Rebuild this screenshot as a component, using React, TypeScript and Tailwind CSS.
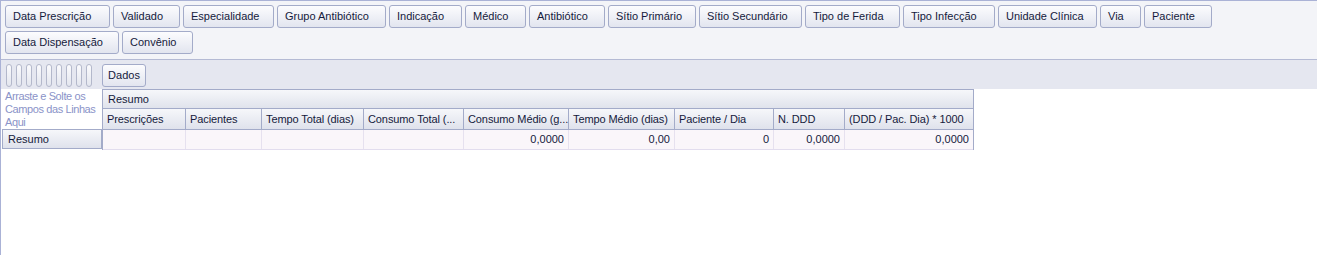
import React from "react";

const row1: [string, number][] = [
  ["Data Prescrição", 105],
  ["Validado", 67],
  ["Especialidade", 91],
  ["Grupo Antibiótico", 109],
  ["Indicação", 73],
  ["Médico", 61],
  ["Antibiótico", 76],
  ["Sítio Primário", 88],
  ["Sítio Secundário", 103],
  ["Tipo de Ferida", 95],
  ["Tipo Infecção", 92],
  ["Unidade Clínica", 99],
  ["Via", 41],
  ["Paciente", 68],
];
const row2: [string, number][] = [
  ["Data Dispensação", 114],
  ["Convênio", 71],
];

const cols: [string, number, string][] = [
  ["Prescrições", 83, ""],
  ["Pacientes", 76, ""],
  ["Tempo Total (dias)", 102, ""],
  ["Consumo Total (...", 100, ""],
  ["Consumo Médio (g...", 105, "0,0000"],
  ["Tempo Médio (dias)", 106, "0,00"],
  ["Paciente / Dia", 99, "0"],
  ["N. DDD", 71, "0,0000"],
  ["(DDD / Pac. Dia) * 1000", 129, "0,0000"],
];

function FieldButton({ label, width }: { label: string; width: number }) {
  return (
    <div
      style={{ width }}
      className="h-[23px] shrink-0 rounded-[3px] border border-[#a3abc9] bg-gradient-to-b from-[#fcfcfe] to-[#e2e5ef] pl-[7px] flex items-center whitespace-nowrap"
    >
      {label}
    </div>
  );
}

export default function App() {
  return (
    <div className="w-[1317px] h-[255px] overflow-hidden bg-white border-l border-t border-[#aab2d6] text-[11px] leading-[13px] text-[#151a3c] font-['Liberation_Sans',Arial,sans-serif]">
      {/* filter area */}
      <div className="bg-[#f3f4f8] border-b border-[#b4bad4] pt-[4px] pl-[4px] pb-[5px] flex flex-col gap-[3px]">
        <div className="flex gap-[3px]">
          {row1.map(([l, w]) => (
            <FieldButton key={l} label={l} width={w} />
          ))}
        </div>
        <div className="flex gap-[3px]">
          {row2.map(([l, w]) => (
            <FieldButton key={l} label={l} width={w} />
          ))}
        </div>
      </div>
      {/* data area */}
      <div className="bg-[#e5e7f0] h-[29px] pt-[4px] pl-[5px] flex items-start">
        <div className="flex gap-[4px]">
          {Array.from({ length: 9 }).map((_, i) => (
            <div
              key={i}
              className="w-[6px] h-[23px] rounded-full border border-[#b3b8cb] bg-gradient-to-b from-[#fbfbfd] to-[#e3e6ee]"
            />
          ))}
        </div>
        <div className="ml-[10px] w-[44px] h-[23px] rounded-[3px] border border-[#a3abc9] bg-gradient-to-b from-[#fcfcfe] to-[#e2e5ef] flex items-center justify-center">
          Dados
        </div>
      </div>
      {/* body */}
      <div className="flex">
        <div className="w-[101px] shrink-0 flex flex-col">
          <div className="h-[40px] pl-[4px] pt-[1px] text-[#8a93c8] text-[11px] leading-[13px] whitespace-nowrap tracking-[-0.4px]">
            Arraste e Solte os
            <br />
            Campos das Linhas
            <br />
            Aqui
          </div>
          <div className="ml-[1px] h-[20px] border border-[#a3abc9] bg-gradient-to-b from-[#f6f7fa] to-[#dfe2ec] pl-[5px] flex items-center">
            Resumo
          </div>
        </div>
        <div className="border-l border-t border-r border-[#a3abc9] w-[872px]">
          <div className="h-[19px] border-b border-[#a3abc9] bg-gradient-to-b from-[#f6f7fa] to-[#e0e3ec] pl-[5px] flex items-center">
            Resumo
          </div>
          <div className="flex h-[21px] border-b border-[#a3abc9]">
            {cols.map(([l, w], i) => (
              <div
                key={l}
                style={{ width: i === cols.length - 1 ? w - 1 : w }}
                className={
                  "shrink-0 bg-gradient-to-b from-[#f6f7fa] to-[#dfe2ec] pl-[4px] flex items-center whitespace-nowrap tracking-[-0.1px] " +
                  (i === cols.length - 1 ? "" : "border-r border-[#a3abc9]")
                }
              >
                {l}
              </div>
            ))}
          </div>
          <div className="flex h-[20px] border-b border-[#e2ddee] bg-[#faf6fa]">
            {cols.map(([l, w, v], i) => (
              <div
                key={l}
                style={{ width: i === cols.length - 1 ? w - 1 : w }}
                className={
                  "shrink-0 pr-[4px] flex items-center justify-end " +
                  (i === cols.length - 1 ? "" : "border-r border-[#e6e1ef]")
                }
              >
                {v}
              </div>
            ))}
          </div>
        </div>
      </div>
    </div>
  );
}
